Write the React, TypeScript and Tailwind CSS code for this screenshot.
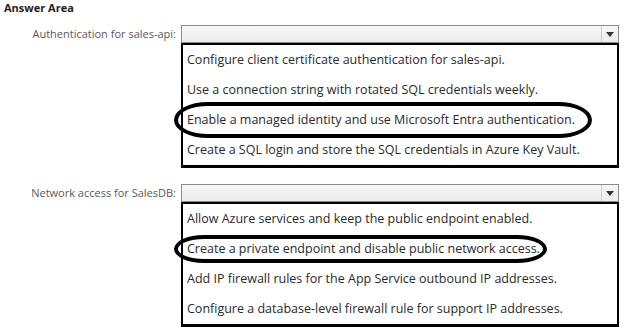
import React from "react";

interface DropAreaProps {
  label: string;
  options: string[];
  selected: number;
  ringClass: string; // size + radius of the highlight ring
}

function Dropdown({ label, options, selected, ringClass }: DropAreaProps) {
  return (
    <div className="flex">
      <div className="w-[181px] pr-[5px] pt-[2px] text-right text-[11px] text-[#5a5a5a] leading-[14px]">
        {label}
      </div>
      <div className="w-[438px]">
        {/* closed select */}
        <div className="flex h-[18px] border border-[#8c8c8c] bg-gradient-to-b from-[#f7f7f7] to-[#ececec]">
          <div className="flex-1" />
          <div className="flex w-[17px] items-center justify-center border-l border-[#cfcfcf]">
            <svg width="8" height="5" viewBox="0 0 8 5">
              <path d="M0 0 H8 L4 5 Z" fill="#333" />
            </svg>
          </div>
        </div>
        {/* open list */}
        <div className="border-2 border-b-[3px] border-black bg-white">
          {options.map((opt, i) => (
            <div
              key={opt}
              className="relative flex h-[30px] items-center pl-[4px] text-[12.5px] text-[#2a2a2a]"
            >
              {opt}
              {i === selected && (
                <div
                  className={`pointer-events-none absolute left-[-9px] top-1/2 -translate-y-1/2 border-[4px] border-black ${ringClass}`}
                />
              )}
            </div>
          ))}
        </div>
      </div>
    </div>
  );
}

export default function App() {
  return (
    <div
      className="h-[329px] w-[624px] overflow-hidden bg-white"
      style={{ fontFamily: "'Open Sans', 'Noto Sans', sans-serif" }}
    >
      <div className="pl-[4px] pt-[1px] text-[11px] font-bold leading-[14px] text-[#222]">
        Answer Area
      </div>
      <div className="mt-[10px]">
        <Dropdown
          label="Authentication for sales-api:"
          selected={2}
          ringClass="h-[36px] w-[418px] rounded-[34px/18px]"
          options={[
            "Configure client certificate authentication for sales-api.",
            "Use a connection string with rotated SQL credentials weekly.",
            "Enable a managed identity and use Microsoft Entra authentication.",
            "Create a SQL login and store the SQL credentials in Azure Key Vault.",
          ]}
        />
      </div>
      <div className="mt-[16px]">
        <Dropdown
          label="Network access for SalesDB:"
          selected={1}
          ringClass="h-[28px] w-[373px] rounded-[30px/14px]"
          options={[
            "Allow Azure services and keep the public endpoint enabled.",
            "Create a private endpoint and disable public network access.",
            "Add IP firewall rules for the App Service outbound IP addresses.",
            "Configure a database-level firewall rule for support IP addresses.",
          ]}
        />
      </div>
    </div>
  );
}
